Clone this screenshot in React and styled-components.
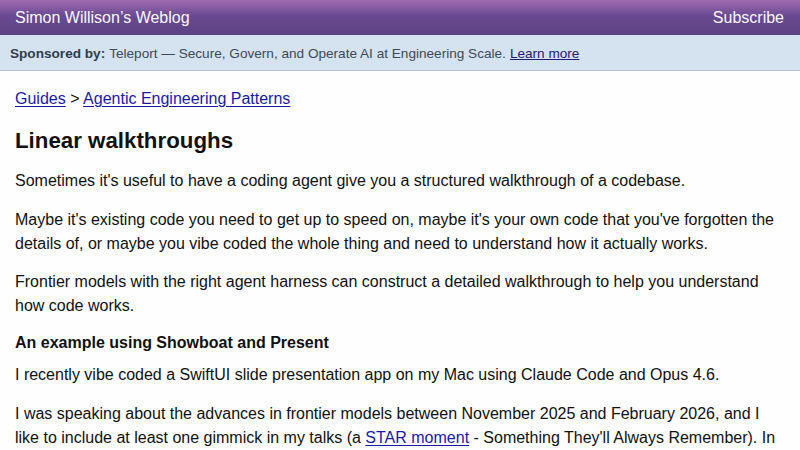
import React from "react";
import styled, { createGlobalStyle } from "styled-components";

const Global = createGlobalStyle`
  html, body { margin: 0; padding: 0; background: #fefefe; }
  body { font-family: "Liberation Sans", Arial, Helvetica, sans-serif; color: #111; }
`;

const Header = styled.header`
  height: 35px;
  box-sizing: border-box;
  display: flex;
  align-items: center;
  justify-content: space-between;
  padding: 1px 16px 0 15px;
  background: linear-gradient(to bottom, #9f6bb0 0%, #6a4a92 45%, #5c4282 100%);
  color: #fff;
  font-size: 16px;
`;

const HeaderLink = styled.a`
  color: #fbf8ff;
  text-decoration: none;
`;

const Sponsor = styled.div`
  height: 36px;
  box-sizing: border-box;
  display: flex;
  align-items: center;
  padding: 2px 10px 0;
  background: #d5e2ef;
  border-bottom: 1px solid #b3bfcb;
  color: #3c4b5a;
  font-size: 13.6px;
  white-space: nowrap;
`;

const SponsorLabel = styled.strong`
  font-weight: bold;
  margin-right: 4px;
  color: #2e3d4c;
`;

const SponsorLink = styled.a`
  color: #1f2070;
  text-decoration: underline;
  margin-left: 4px;
`;

const Main = styled.main`
  padding: 16px 15px 0;
  font-size: 16px;
  line-height: 24px;
`;

const Crumbs = styled.nav`
  margin: 0 0 17px;
  color: #111;
`;

const Link = styled.a`
  color: #1a1aa6;
  text-decoration: underline;
  text-underline-offset: 2px;
`;

const Title = styled.h1`
  font-size: 22.3px;
  line-height: 26px;
  font-weight: bold;
  margin: 0 0 15px;
`;

const Para = styled.p`
  margin: 0 0 14.5px;
`;

const SubHead = styled.h3`
  font-size: 16px;
  line-height: 24px;
  font-weight: bold;
  margin: -1.5px 0 8px;
`;

export default function App() {
  return (
    <>
      <Global />
      <Header>
        <HeaderLink href="#">Simon Willison’s Weblog</HeaderLink>
        <HeaderLink href="#">Subscribe</HeaderLink>
      </Header>
      <Sponsor>
        <SponsorLabel>Sponsored by:</SponsorLabel>
        Teleport — Secure, Govern, and Operate AI at Engineering Scale.
        <SponsorLink href="#">Learn more</SponsorLink>
      </Sponsor>
      <Main>
        <Crumbs>
          <Link href="#">Guides</Link> &gt; <Link href="#">Agentic Engineering Patterns</Link>
        </Crumbs>
        <Title>Linear walkthroughs</Title>
        <Para>Sometimes it's useful to have a coding agent give you a structured walkthrough of a codebase.</Para>
        <Para>
          Maybe it's existing code you need to get up to speed on, maybe it's your own code that you've forgotten the
          details of, or maybe you vibe coded the whole thing and need to understand how it actually works.
        </Para>
        <Para>
          Frontier models with the right agent harness can construct a detailed walkthrough to help you understand
          how code works.
        </Para>
        <SubHead>An example using Showboat and Present</SubHead>
        <Para>I recently vibe coded a SwiftUI slide presentation app on my Mac using Claude Code and Opus 4.6.</Para>
        <Para>
          I was speaking about the advances in frontier models between November 2025 and February 2026, and I
          like to include at least one gimmick in my talks (a <Link href="#">STAR moment</Link> - Something They'll
          Always Remember). In
        </Para>
      </Main>
    </>
  );
}
